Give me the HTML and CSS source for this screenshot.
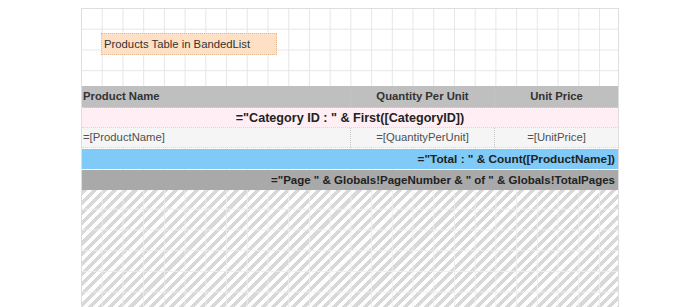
FILE: index.html
```html
<!DOCTYPE html>
<html>
<head>
<meta charset="utf-8">
<link rel="stylesheet" href="styles.css">
</head>
<body>
<div class="canvas">
  <div class="title-area">
    <div class="title-box">Products Table in BandedList</div>
  </div>
  <div class="row header">
    <div class="cell left">Product Name</div>
    <div class="cell center sep">Quantity Per Unit</div>
    <div class="cell center sep">Unit Price</div>
  </div>
  <div class="band group">="Category ID : " &amp; First([CategoryID])</div>
  <div class="row detail">
    <div class="cell left">=[ProductName]</div>
    <div class="cell center sep">=[QuantityPerUnit]</div>
    <div class="cell center sep">=[UnitPrice]</div>
  </div>
  <div class="band total">="Total : " &amp; Count([ProductName])</div>
  <div class="band page">="Page " &amp; Globals!PageNumber &amp; " of " &amp; Globals!TotalPages</div>
  <div class="hatch"></div>
</div>
</body>
</html>
```
FILE: styles.css
```css
html, body {
  margin: 0;
  padding: 0;
  background: #ffffff;
  overflow: hidden;
}
body {
  font-family: "Liberation Sans", Arial, sans-serif;
  color: #333;
}
.canvas {
  box-sizing: border-box;
  width: 538px;
  height: 320px;
  margin: 8px auto 0;
  border: 1px solid #dedede;
  border-bottom: none;
  display: flex;
  flex-direction: column;
  background-color: #fff;
  background-image:
    linear-gradient(to right, transparent 20px, #e6e6e6 20px),
    linear-gradient(to bottom, transparent 20px, #e6e6e6 20px);
  background-size: 20.72px 20.72px;
}
.title-area {
  height: 77px;
  box-sizing: border-box;
  padding: 24px 0 0 19px;
}
.title-box {
  box-sizing: border-box;
  width: 176px;
  height: 22px;
  background: #ffe0c4;
  border: 1px dotted #e6b994;
  font-size: 11.3px;
  line-height: 20px;
  padding-left: 2px;
  color: #333;
}
.row {
  display: grid;
  grid-template-columns: 268px 144px 124px;
  height: 21px;
  box-sizing: border-box;
  border-bottom: 1px dotted #d8d8d8;
}
.cell {
  font-size: 11px;
  line-height: 20px;
  white-space: nowrap;
  overflow: hidden;
}
.left { padding-left: 1px; }
.center { text-align: center; }
.sep { border-left: 1px dotted #c8c8c8; }
.header {
  background: #bfbfbf;
  font-weight: bold;
  color: #333;
  height: 22px;
}
.header .cell { line-height: 21px; font-size: 11.3px; }
.detail {
  background: #f5f5f5;
  color: #505050;
  height: 20px;
}
.detail .cell { font-size: 11.3px; line-height: 19px; }
.band {
  height: 20px;
  box-sizing: border-box;
  font-weight: bold;
  line-height: 20px;
  white-space: nowrap;
  color: #222;
  padding: 0 3px;
}
.group {
  background: #ffeef3;
  text-align: center;
  font-size: 12.6px;
  border-bottom: 1px dotted #d8d8d8;
}
.total {
  background: #7fcaf6;
  text-align: right;
  font-size: 11.8px;
  margin-top: 1px;
}
.page {
  background: #a9a9a9;
  text-align: right;
  font-size: 11.5px;
  margin-top: 1px;
}
.hatch {
  flex: 1;
  background-image:
    linear-gradient(to right, transparent 20px, rgba(238,238,238,0.9) 20px),
    linear-gradient(to bottom, transparent 20px, rgba(238,238,238,0.9) 20px),
    repeating-linear-gradient(135deg, #d8d8d8 0, #d8d8d8 3.6px, #ffffff 3.6px, #ffffff 7.2px);
  background-size: 20.72px 20.72px, 20.72px 20.72px, auto;
  background-position: 0 -1px, 0 -1px, 0 0;
}
```
